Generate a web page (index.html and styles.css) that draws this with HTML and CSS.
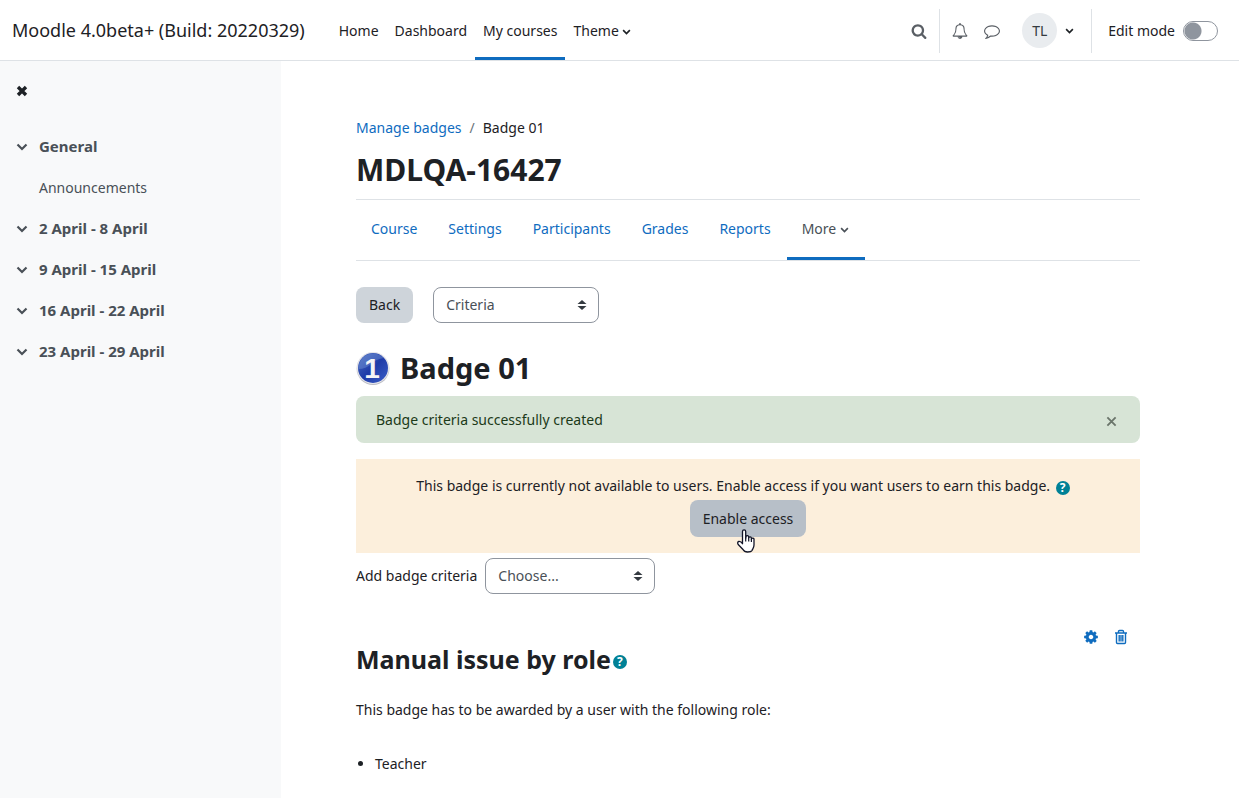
FILE: index.html
```html
<!DOCTYPE html>
<html lang="en">
<head>
<meta charset="utf-8">
<meta name="viewport" content="width=device-width, initial-scale=1">
<title>MDLQA-16427: Badge 01</title>
<link rel="stylesheet" href="styles.css">
</head>
<body>
<svg class="sprite" aria-hidden="true">
  <symbol id="chevron" viewBox="0 0 12 8"><path d="M1.500 1.500 6 6l4.500-4.500" fill="none" stroke="currentColor" stroke-width="2.200"/></symbol>
  <symbol id="sort" viewBox="0 0 10 12"><path d="M5 1 9.500 5H.5zM5 11 .5 7h9z" fill="currentColor"/></symbol>
</svg>
<header class="topbar">
  <a class="brand" href="#">Moodle 4.0beta+ (Build: 20220329)</a>
  <nav class="primary" aria-label="Primary">
    <a href="#">Home</a>
    <a href="#">Dashboard</a>
    <a class="active" href="#">My courses</a>
    <a href="#">Theme <svg class="caret"><use href="#chevron"/></svg></a>
  </nav>
  <div class="tools">
    <button class="tool search" aria-label="Search"><svg class="tool-icon" viewBox="0 0 1792 1792"><path d="M1216 832q0-185-131.500-316.500t-316.500-131.500-316.500 131.500-131.500 316.500 131.500 316.500 316.500 131.500 316.500-131.500 131.500-316.500zm512 832q0 52-38 90t-90 38q-54 0-90-38l-343-342q-179 124-399 124-143 0-273.500-55.500t-225-150-150-225-55.500-273.500 55.500-273.500 150-225 225-150 273.500-55.500 273.500 55.500 225 150 150 225 55.500 273.500q0 220-124 399l343 343q37 37 37 90z"/></svg></button>
    <button class="tool" aria-label="Notifications"><svg class="tool-icon" viewBox="0 0 1792 1792"><path d="M912 1696q0-16-16-16-59 0-101.500-42.500t-42.500-101.500q0-16-16-16t-16 16q0 73 51.500 124.500t124.500 51.500q16 0 16-16zm-666-288h1300q-266-300-266-832 0-51-24-105t-69-103-121.500-80.500-169.500-31.500-169.500 31.500-121.500 80.500-69 103-24 105q0 532-266 832zm1482 0q0 52-38 90t-90 38h-448q0 106-75 181t-181 75-181-75-75-181h-448q-52 0-90-38t-38-90q50-42 91-88t85-119.500 74.500-158.500 50-206 19.500-260q0-152 117-282.500t307-158.500q-8-19-8-39 0-40 28-68t68-28 68 28 28 68q0 20-8 39 190 28 307 158.500t117 282.500q0 139 19.500 260t50 206 74.500 158.500 85 119.500 91 88z"/></svg></button>
    <button class="tool" aria-label="Messages"><svg class="tool-icon" viewBox="0 0 1792 1792"><path d="M896 384q-204 0-381.500 69.500t-282 187.500-104.500 255q0 112 71.500 213.500t201.500 175.500l87 50-27 96q-24 91-70 172 152-63 275-171l43-38 57 6q69 8 130 8 204 0 381.500-69.500t282-187.500 104.500-255-104.500-255-282-187.500-381.500-69.500zm896 512q0 174-120 321.500t-326 233-450 85.500q-70 0-145-8-198 175-460 242-49 14-114 22h-5q-15 0-27-10.500t-16-27.500v-1q-3-4-.5-12t2-10 4.500-9.500l6-9 7-8.500 8-9q7-8 31-34.500t34.500-38 31-39.500 32.500-51 27-59 26-76q-157-89-247.500-220t-90.500-281q0-174 120-321.500t326-233 450-85.500 450 85.500 326 233 120 321.500z"/></svg></button>
    <button class="user" aria-label="User menu"><span class="avatar">TL</span><svg class="caret"><use href="#chevron"/></svg></button>
    <label class="edit-mode">Edit mode <input type="checkbox" class="switch"></label>
  </div>
</header>
<div class="page">
  <aside class="drawer">
    <button class="drawer-close" aria-label="Close course index"><svg viewBox="0 0 12 12"><path d="m2 2 8 8m0-8-8 8" fill="none" stroke="currentColor" stroke-width="3.400"/></svg></button>
    <nav class="index" aria-label="Course index">
      <a class="section" href="#"><svg><use href="#chevron"/></svg>General</a>
      <a class="activity" href="#">Announcements</a>
      <a class="section" href="#"><svg><use href="#chevron"/></svg>2 April - 8 April</a>
      <a class="section" href="#"><svg><use href="#chevron"/></svg>9 April - 15 April</a>
      <a class="section" href="#"><svg><use href="#chevron"/></svg>16 April - 22 April</a>
      <a class="section" href="#"><svg><use href="#chevron"/></svg>23 April - 29 April</a>
    </nav>
  </aside>
  <main class="content">
    <nav class="breadcrumb" aria-label="Breadcrumb"><a href="#">Manage badges</a><span class="slash">/</span><span>Badge 01</span></nav>
    <h1 class="course-title">MDLQA-16427</h1>
    <nav class="tabs" aria-label="Course">
      <a href="#">Course</a><a href="#">Settings</a><a href="#">Participants</a><a href="#">Grades</a><a href="#">Reports</a><a class="active" href="#">More <svg class="caret"><use href="#chevron"/></svg></a>
    </nav>
    <div class="actions">
      <button class="btn">Back</button>
      <span class="select-wrap view-select"><select class="select" aria-label="Badge page"><option>Criteria</option></select><svg class="sort"><use href="#sort"/></svg></span>
    </div>
    <h2 class="badge-title">
      <svg class="badge-image" viewBox="0 0 34 34" aria-hidden="true">
        <defs>
          <linearGradient id="blue" x1="0" y1="0" x2="1" y2="1"><stop offset="0" stop-color="#4a6cc0"/><stop offset=".5" stop-color="#1f3ba8"/><stop offset="1" stop-color="#3a5ec8"/></linearGradient>
          <linearGradient id="rim" x1="0" y1="0" x2="0" y2="1"><stop offset="0" stop-color="#e8e8ec"/><stop offset="1" stop-color="#b9bac2"/></linearGradient>
        </defs>
        <circle cx="17" cy="17.500" r="16.500" fill="url(#rim)"/>
        <circle cx="17" cy="17" r="16" fill="#e6e6eb"/>
        <circle cx="17" cy="17" r="15" fill="url(#blue)"/>
        <path d="M2.500 18A14.800 14.800 0 0 1 28 7Q20 8 15 13T2.500 18z" fill="#87a8e0" opacity=".35"/>
        <text class="badge-digit" x="16" y="27" text-anchor="middle">1</text>
      </svg>
      <span>Badge 01</span>
    </h2>
    <div class="alert" role="alert"><span>Badge criteria successfully created</span><button class="dismiss" aria-label="Dismiss"><svg viewBox="0 0 12 12"><path d="m1.500 1.500 9 9m0-9-9 9" fill="none" stroke="currentColor" stroke-width="2"/></svg></button></div>
    <section class="status">
      <p>This badge is currently not available to users. Enable access if you want users to earn this badge. <button class="help" aria-label="Help with access">?</button></p>
      <div class="enable">
        <button class="btn btn-hover">Enable access</button>
        <svg class="pointer" viewBox="0 0 18 24" aria-hidden="true"><path d="M5.500 14V2.500a1.500 1.500 0 0 1 3.200 0V9l.3-1.500a1.400 1.400 0 0 1 2.700.3v1a1.400 1.400 0 0 1 2.700.4v1a1.300 1.300 0 0 1 2.600.5V16c0 3-1.500 4-2 5.500-.6 1.200-2 1.500-4.500 1.500s-3.500-.6-4.500-2.500L1.200 15.500C.3 14 .7 12.700 1.700 12.500c1.500-.2 2.800.5 3.800 2.300z" fill="#fff" stroke="#111427" stroke-width="1.300" stroke-linejoin="round"/><path d="M8.700 8.500v4M11.700 9v3.500M14.400 10v3" fill="none" stroke="#111427" stroke-width="1.200"/></svg>
      </div>
    </section>
    <div class="add-row"><label for="criteria">Add badge criteria</label><span class="select-wrap add-select"><select class="select" id="criteria"><option>Choose...</option></select><svg class="sort"><use href="#sort"/></svg></span></div>
    <section class="criterion">
      <div class="criterion-tools">
        <button aria-label="Edit"><svg viewBox="0 0 1792 1792"><path d="M1152 896q0-106-75-181t-181-75-181 75-75 181 75 181 181 75 181-75 75-181zm512-109v222q0 12-8 23t-20 13l-185 28q-19 54-39 91 35 50 107 138 10 12 10 25t-9 23q-27 37-99 108t-94 71q-12 0-26-9l-138-108q-44 23-91 38-16 136-29 186-7 28-36 28h-222q-14 0-24.500-8.500t-11.500-21.500l-28-184q-49-16-90-37l-141 107q-10 9-25 9-14 0-25-11-126-114-165-168-7-10-7-23 0-12 8-23 15-21 51-66.500t54-70.500q-27-50-41-99l-183-27q-13-2-21-12.500t-8-23.500v-222q0-12 8-23t19-13l186-28q14-46 39-92-40-57-107-138-10-12-10-24 0-10 9-23 26-36 98.500-107.500t94.500-71.500q13 0 26 10l138 107q44-23 91-38 16-136 29-186 7-28 36-28h222q14 0 24.500 8.500t11.500 21.500l28 184q49 16 90 37l142-107q9-9 24-9 13 0 25 10 129 119 165 170 7 8 7 22 0 12-8 23-15 21-51 66.500t-54 70.500q26 50 41 98l183 28q13 2 21 12.500t8 23.500z"/></svg></button>
        <button aria-label="Delete"><svg viewBox="0 0 16 16"><path d="M2 4h12M5.500 4V2.500q0-1 1-1h3q1 0 1 1V4M3.500 4v9.500q0 1 1 1h7q1 0 1-1V4M6.200 6v6.500M8 6v6.500M9.800 6v6.500" fill="none" stroke="currentColor" stroke-width="1.400"/></svg></button>
      </div>
      <h3 class="criterion-title">Manual issue by role<button class="help" aria-label="Help with Manual issue by role">?</button></h3>
      <p>This badge has to be awarded by a user with the following role:</p>
      <ul class="roles"><li>Teacher</li></ul>
    </section>
  </main>
</div>
</body>
</html>
```
FILE: styles.css
```css
* { box-sizing: border-box; }
body {
  margin: 0;
  color: #1d2125;
  background: #fff;
  font: 400 14px/22px "Noto Sans", "Open Sans", sans-serif;
}
a { color: #0f6cbf; text-decoration: none; }
p, h1, h2, h3 { margin: 0; }
button { font: inherit; color: inherit; border: 0; background: none; padding: 0; }
svg { display: block; fill: currentColor; }
.sprite { display: none; }
.caret { display: inline-block; width: 9px; height: 6px; vertical-align: 1px; }

.topbar {
  display: flex;
  height: 61px;
  padding: 0 21px 0 12px;
  border-bottom: 1px solid #dee2e6;
}
.brand { margin-right: 26px; color: #1d2125; font-size: 18px; line-height: 60px; }
.primary { display: flex; }
.primary a {
  padding: 0 8px;
  border-bottom: 3px solid transparent;
  color: #1d2125;
  line-height: 62px;
  white-space: nowrap;
}
.primary .active { border-color: #0f6cbf; }
.tools { display: flex; align-items: center; margin-left: auto; padding-top: 1px; }
.tool { padding: 0 8px; color: #5a5f65; }
.tool-icon { width: 16px; height: 16px; }
.tool.search { height: 44px; padding: 0 12px 0 8px; margin-right: 4px; border-right: 1px solid #dee2e6; }
.user { display: flex; align-items: center; gap: 8px; height: 44px; margin-left: 12px; padding: 0 17px 0 8px; border-right: 1px solid #dee2e6; }
.tool + .user { margin-left: 6px; }
.avatar { width: 35px; height: 35px; border-radius: 50%; background: #e9ecef; color: #343a40; line-height: 35px; text-align: center; }
.edit-mode { display: flex; align-items: center; gap: 8px; margin-left: 16px; white-space: nowrap; }
.switch {
  appearance: none;
  width: 35px;
  height: 20px;
  margin: 0;
  border: 1px solid #8f959e;
  border-radius: 10px;
  background: radial-gradient(circle at 9px 9px, #8f959e 8px, transparent 9px);
}

.page { display: flex; min-height: calc(100vh - 61px); }
.drawer { flex: 0 0 281px; padding: 24px 16px; background: #f8f9fa; }
.drawer-close { display: block; }
.drawer-close svg { width: 12px; height: 12px; }
.index { display: flex; flex-direction: column; margin-top: 29px; }
.index a { color: #495057; line-height: 41px; }
.index .section { display: flex; align-items: center; gap: 11px; font-size: 15px; font-weight: 700; }
.section svg { width: 12px; height: 8px; }
.index .activity { padding-left: 23px; }

.content { flex: 1; min-width: 0; padding: 56px 99px 24px 75px; }
.breadcrumb { display: flex; gap: 8px; }
.slash { color: #6a737b; }
.course-title { margin-top: 11px; font-size: 30px; line-height: 40px; font-weight: 700; }
.tabs { display: flex; height: 62px; margin-top: 9px; border-top: 1px solid #dee2e6; border-bottom: 1px solid #dee2e6; }
.tabs a { padding: 0 16px 0 15px; border-bottom: 3px solid transparent; line-height: 58px; white-space: nowrap; }
.tabs .active { border-color: #0f6cbf; color: #495057; }
.actions { display: flex; gap: 20px; margin-top: 26px; }
.btn { height: 36px; padding: 0 13px; border-radius: 8px; background: #ced4da; }
.btn-hover { background: #b7bfc8; }
.select-wrap { position: relative; display: flex; }
.select {
  appearance: none;
  width: 100%;
  height: 36px;
  padding: 0 12px;
  border: 1px solid #8f959e;
  border-radius: 8px;
  background: #fff;
  color: #495057;
  font: inherit;
}
.sort { position: absolute; right: 12px; top: 12px; width: 10px; height: 12px; color: #343a40; pointer-events: none; }
.view-select { width: 166px; }
.add-select { width: 170px; }
.badge-title { display: flex; align-items: center; gap: 10px; margin-top: 25px; font-size: 29px; line-height: 40px; font-weight: 700; }
.badge-image { width: 34px; height: 34px; }
.badge-digit { fill: #f4f4f6; font: 700 28px "Liberation Sans", sans-serif; }
.alert {
  display: flex;
  justify-content: space-between;
  align-items: center;
  min-height: 47px;
  margin-top: 8px;
  padding: 0 23px 0 20px;
  border-radius: 8px;
  background: #d7e4d6;
  color: #1c3a19;
}
.dismiss { padding-top: 3px; }
.dismiss svg { width: 11px; height: 11px; color: #6a756a; }
.status { margin-top: 16px; padding: 16px 12px; background: #fcefdc; text-align: center; }
.help {
  width: 14px;
  height: 14px;
  border-radius: 50%;
  background: #008196;
  color: #fff;
  font-size: 12px;
  line-height: 14px;
  font-weight: 700;
  text-align: center;
  vertical-align: 3px;
}
.status .help { margin: 0 10px 0 2px; vertical-align: -1px; }
.enable { position: relative; width: max-content; margin: 3px auto 0; }
.enable .btn { display: block; height: 37px; }
.pointer { position: absolute; left: 47px; top: 29px; width: 18px; height: 24px; }
.add-row { display: flex; align-items: center; gap: 8px; margin-top: 5px; }
.criterion { margin-top: 35px; }
.criterion-tools { display: flex; justify-content: flex-end; gap: 14px; height: 16px; padding-right: 11px; color: #0f6cbf; }
.criterion-tools svg { width: 16px; height: 16px; }
.criterion-title { margin: 0 0 26px; font-size: 25px; line-height: 28px; font-weight: 700; }
.criterion-title .help { margin-left: 2px; }
.roles { margin: 32px 0 0; padding-left: 19px; }
```
